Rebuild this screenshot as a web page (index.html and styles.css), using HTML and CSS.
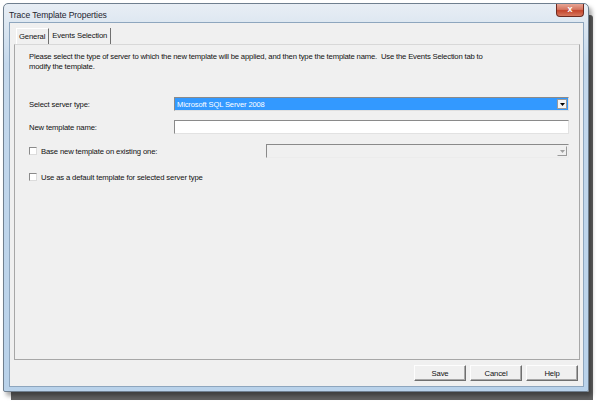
FILE: index.html
```html
<!DOCTYPE html>
<html>
<head>
<meta charset="utf-8">
<link rel="stylesheet" href="styles.css">
</head>
<body>
<div class="window">
  <div class="titlebar">
    <span class="title">Trace Template Properties</span>
    <span class="close">x</span>
  </div>
  <div class="client">
    <div class="tabs">
      <div class="tab selected">General</div>
      <div class="tab">Events Selection</div>
    </div>
    <div class="panel">
      <p class="intro">Please select the type of server to which the new template will be applied, and then type the template name.&nbsp; Use the Events Selection tab to<br>modify the template.</p>
      <div class="row row-server">
        <span class="label">Select server type:</span>
        <div class="combo">
          <span class="combo-value">Microsoft SQL Server 2008</span>
          <span class="combo-arrow"><svg width="5" height="3" viewBox="0 0 5 3"><path d="M0 0H5L2.5 3Z" fill="#000"/></svg></span>
        </div>
      </div>
      <div class="row row-name">
        <span class="label">New template name:</span>
        <div class="textbox"></div>
      </div>
      <div class="row row-base">
        <span class="check"></span>
        <span class="check-label">Base new template on existing one:</span>
        <div class="combo disabled">
          <span class="combo-value"></span>
          <span class="combo-arrow"><svg width="5" height="3" viewBox="0 0 5 3"><path d="M0 0H5L2.5 3Z" fill="#a0a0a0"/></svg></span>
        </div>
      </div>
      <div class="row row-default">
        <span class="check"></span>
        <span class="check-label">Use as a default template for selected server type</span>
      </div>
    </div>
    <div class="buttons">
      <button class="btn">Save</button>
      <button class="btn">Cancel</button>
      <button class="btn">Help</button>
    </div>
  </div>
</div>
</body>
</html>
```
FILE: styles.css
```css
html, body {
  margin: 0;
  padding: 0;
  background: #ffffff;
}
body {
  font-family: "Liberation Sans", Arial, sans-serif;
  width: 604px;
  height: 406px;
  overflow: hidden;
}
.window {
  margin: 3px 0 0 3px;
  width: 586px;
  height: 389px;
  box-sizing: border-box;
  border: 1px solid #6f7f8f;
  border-radius: 5px 5px 2px 2px;
  background: linear-gradient(to bottom, #e8eef5 0px, #dde7f1 20px, #c4d8ec 60px, #b9d2ea 100%);
  padding: 0 4px 4px 5px;
  display: flex;
  flex-direction: column;
  box-shadow: 3px 4px 4px rgba(0,0,0,0.35), 6px 10px 0 -2px rgba(70,70,70,0.85);
}
.titlebar {
  height: 18px;
  display: flex;
  align-items: flex-start;
}
.title {
  font-size: 8.6px;
  color: #1e2530;
  margin-top: 6px;
  letter-spacing: -0.1px;
}
.close {
  margin-left: auto;
  margin-right: 0;
  width: 28px;
  height: 13px;
  box-sizing: border-box;
  border: 1px solid #6d2a20;
  border-top: none;
  border-radius: 0 0 4px 4px;
  background: linear-gradient(to bottom, #e8a493 0%, #d47560 45%, #c4452c 55%, #d6785e 100%);
  color: #fff;
  font-size: 9px;
  font-weight: bold;
  line-height: 11px;
  text-align: center;
}
.client {
  flex: 1;
  background: #f0f0f0;
  border: 1px solid #8ea6be;
  padding: 5px 3px 5px 4px;
  display: flex;
  flex-direction: column;
  font-size: 7.7px;
  color: #111;
}
.tabs {
  display: flex;
  height: 16px;
  padding-left: 2px;
}
.tab {
  padding: 0 3px;
  line-height: 16px;
  font-size: 7.7px;
  border-right: 1px solid #707070;
  letter-spacing: -0.15px;
}
.tab.selected {
  border-left: 1px solid #ffffff;
  border-top: 1px solid #ffffff;
  line-height: 15px;
  padding: 0 3px 0 2px;
}
.panel {
  flex: 1;
  border: 1px solid #a7a7a7;
  border-top-color: #d8d8d8;
  padding: 7px 10px 0 14px;
  display: flex;
  flex-direction: column;
}
.intro {
  margin: 0;
  line-height: 10px;
  letter-spacing: -0.18px;
}
.row {
  display: flex;
  align-items: center;
  height: 14px;
  letter-spacing: -0.15px;
}
.row-server { margin-top: 25px; }
.row-name { margin-top: 9px; }
.row-base { margin-top: 10px; }
.row-default { margin-top: 12px; }
.label {
  width: 145px;
  flex: none;
}
.combo {
  flex: 1;
  height: 14px;
  box-sizing: border-box;
  border: 1px solid #8a8a8a;
  border-right-color: #e0e0e0;
  border-bottom-color: #e0e0e0;
  background: #3399ff;
  display: flex;
  align-items: center;
  padding-left: 2px;
}
.combo-value {
  flex: 1;
  color: #fff;
  font-size: 7.5px;
  letter-spacing: -0.1px;
}
.combo-arrow {
  width: 10px;
  height: 10px;
  box-sizing: border-box;
  background: #f4f4f4;
  border: 1px solid #9a9a9a;
  display: flex;
  align-items: center;
  justify-content: center;
  margin-right: 1px;
}
.combo.disabled {
  flex: none;
  width: 303px;
  margin-left: auto;
  background: #f0f0f0;
  border-color: #8a8a8a #ececec #ececec #8a8a8a;
}
.combo.disabled .combo-arrow {
  background: #f0f0f0;
  border-color: #f0f0f0 #9a9a9a #9a9a9a #f0f0f0;
}
.textbox {
  flex: 1;
  height: 14px;
  box-sizing: border-box;
  background: #fff;
  border: 1px solid #8a8a8a;
  border-right-color: #e2e2e2;
  border-bottom-color: #e2e2e2;
}
.check {
  width: 6px;
  height: 6px;
  border: 1px solid #8a8a8a;
  border-right-color: #dcdcdc;
  border-bottom-color: #dcdcdc;
  background: #fff;
  margin-right: 4px;
  flex: none;
}
.buttons {
  display: flex;
  justify-content: flex-end;
  gap: 4px;
  margin-top: 5px;
  padding-right: 2px;
}
.btn {
  width: 52px;
  height: 16px;
  padding: 0;
  font-family: "Liberation Sans", Arial, sans-serif;
  font-size: 7.7px;
  letter-spacing: -0.15px;
  color: #111;
  background: #f0f0f0;
  border: 1px solid;
  border-color: #fdfdfd #6f6f6f #6f6f6f #fdfdfd;
  box-shadow: inset -1px -1px 0 #a8a8a8;
}
```
